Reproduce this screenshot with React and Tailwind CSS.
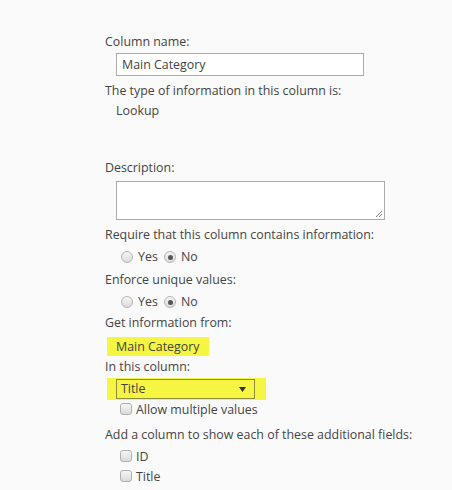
import React from 'react';

const Radio = ({ checked }) => (
  <span className="w-[12px] h-[12px] rounded-full border border-[#b5b5b5] bg-gradient-to-b from-[#f4f4f4] to-[#dcdcdc] flex items-center justify-center shrink-0">
    {checked && <span className="w-[5px] h-[5px] rounded-full bg-[#555]" />}
  </span>
);

const Check = () => (
  <span className="mt-[1px] w-[12px] h-[12px] rounded-[3px] border border-[#b0b0b0] bg-gradient-to-b from-[#f6f6f6] to-[#dadada] shrink-0" />
);

const YesNo = ({ className }) => (
  <div className={`flex items-center h-[16px] pl-[16px] ${className}`}>
    <Radio />
    <span className="ml-[5px] w-[26px]">Yes</span>
    <Radio checked />
    <span className="ml-[5px]">No</span>
  </div>
);

const CheckRow = ({ label, className }) => (
  <div className={`flex items-start h-[16px] pl-[15px] ${className}`}>
    <Check />
    <span className="ml-[4px]">{label}</span>
  </div>
);

export default function App() {
  return (
    <div
      className="w-[452px] h-[490px] bg-[#fafafa] text-[#444] text-[12.4px] leading-[16px] pl-[105px] pt-[34px] overflow-hidden"
      style={{ fontFamily: '"Open Sans", "Noto Sans", sans-serif' }}
    >
      <div>Column name:</div>
      <div className="mt-[3px] ml-[11px] w-[248px] h-[23px] border border-[#ababab] bg-white pl-[5px] leading-[21px]">
        Main Category
      </div>
      <div className="mt-[7px]">The type of information in this column is:</div>
      <div className="mt-[4px] ml-[11px]">Lookup</div>

      <div className="mt-[41px]">Description:</div>
      <div className="relative mt-[5px] ml-[11px] w-[269px] h-[39px] border border-[#ababab] bg-white">
        <svg className="absolute right-[1px] bottom-[1px]" width="8" height="8" viewBox="0 0 8 8">
          <path d="M7 1 L1 7 M7 4 L4 7" stroke="#777" strokeWidth="1" />
        </svg>
      </div>

      <div className="mt-[7px]">Require that this column contains information:</div>
      <YesNo className="mt-[6px]" />

      <div className="mt-[7px]">Enforce unique values:</div>
      <YesNo className="mt-[6px]" />

      <div className="mt-[5px]">Get information from:</div>
      <div className="mt-[6px] ml-[2px] w-[102px] h-[19px] bg-[#f5f542] pl-[9px] leading-[19px]">
        Main Category
      </div>

      <div className="mt-[3px]">In this column:</div>
      <div className="mt-[3px] ml-[2px] w-[159px] h-[22px] bg-[#f5f542] pl-[9px] pt-[1px]">
        <div className="w-[139px] h-[20px] border border-[#8c8c3a] flex items-center justify-between pl-[4px] pr-[8px] leading-[18px]">
          <span>Title</span>
          <svg width="7" height="5" viewBox="0 0 7 5">
            <path d="M0 0 H7 L3.5 5 Z" fill="#333" />
          </svg>
        </div>
      </div>
      <CheckRow label="Allow multiple values" className="mt-[2px]" />

      <div className="mt-[9px]">Add a column to show each of these additional fields:</div>
      <CheckRow label="ID" className="mt-[6px]" />
      <CheckRow label="Title" className="mt-[4px]" />
    </div>
  );
}
